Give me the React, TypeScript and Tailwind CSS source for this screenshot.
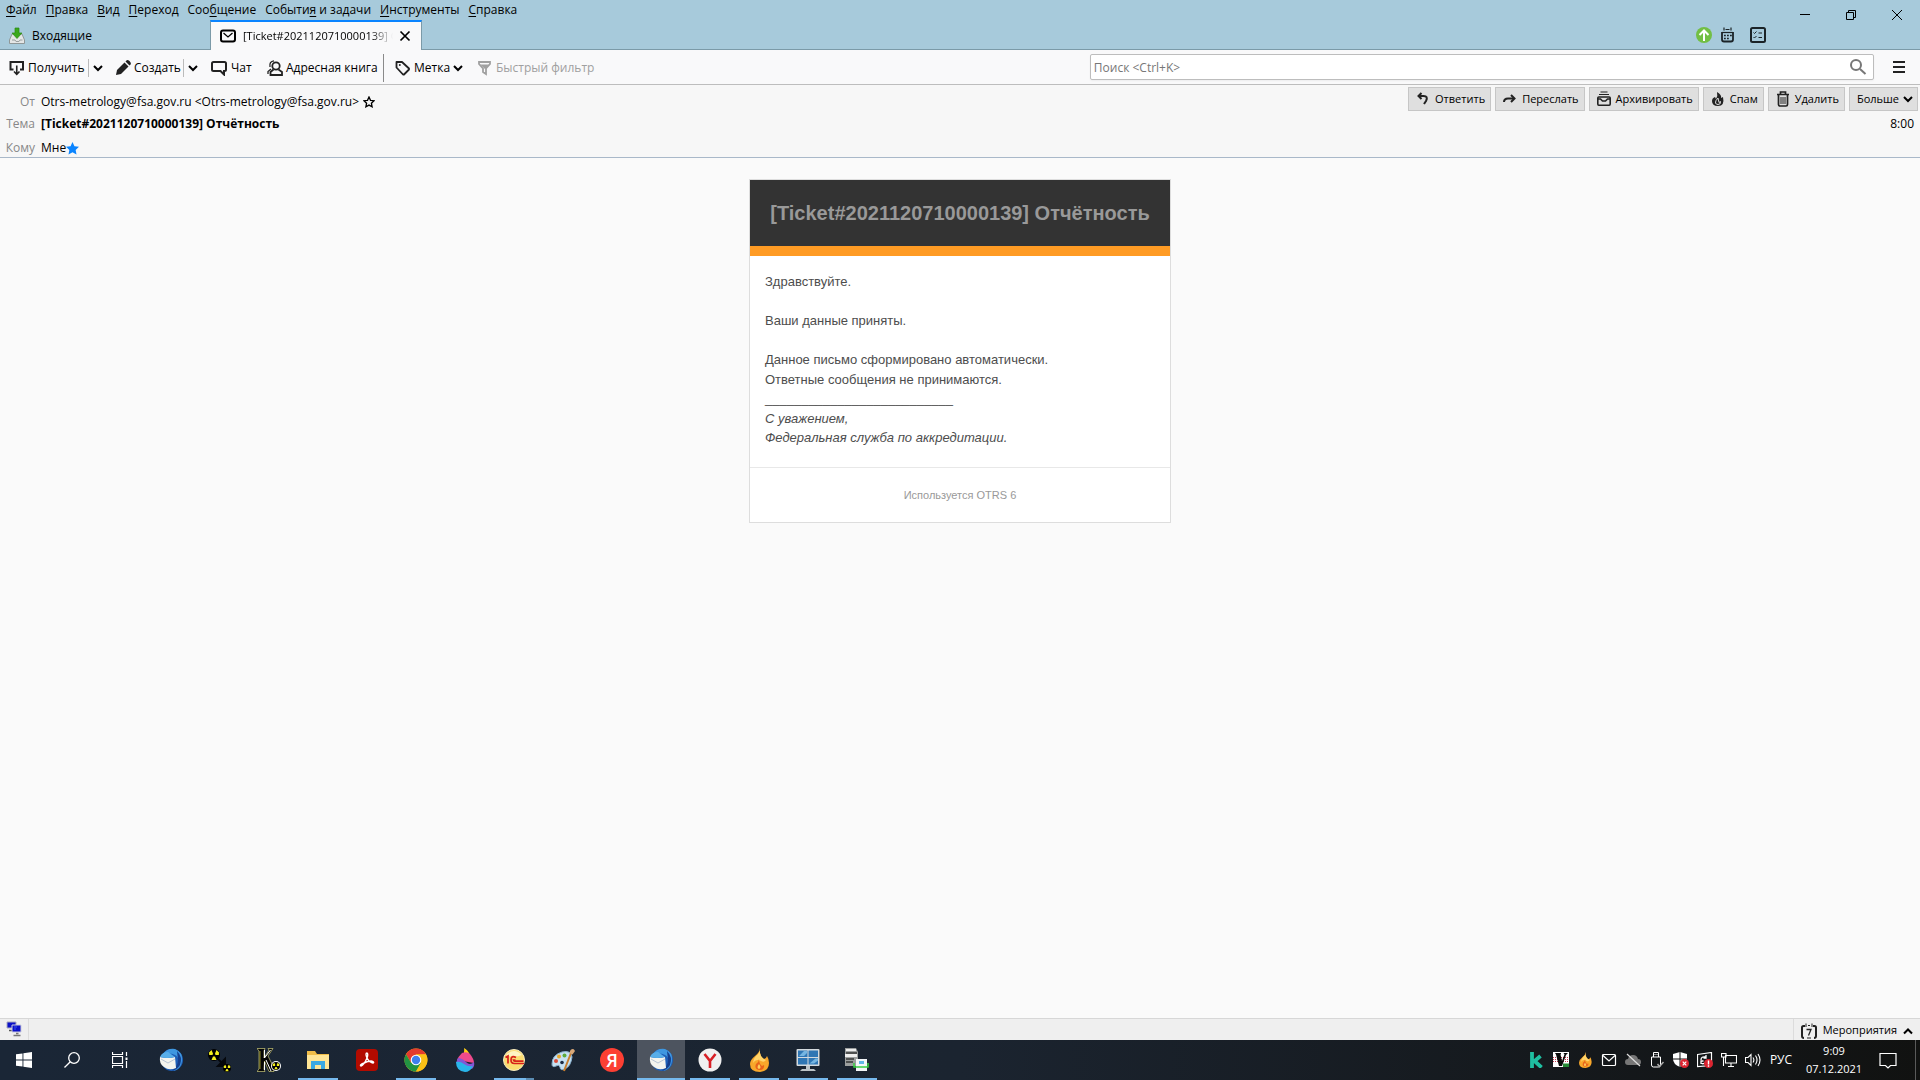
import type { ReactNode } from 'react';

const menuItems = [
  { before: '', key: 'Ф', after: 'айл' },
  { before: '', key: 'П', after: 'равка' },
  { before: '', key: 'В', after: 'ид' },
  { before: '', key: 'П', after: 'ереход' },
  { before: 'Соо', key: 'б', after: 'щение' },
  { before: 'Событи', key: 'я', after: ' и задачи' },
  { before: '', key: 'И', after: 'нструменты' },
  { before: '', key: 'С', after: 'правка' },
];

interface IconProps {
  children: ReactNode;
  className?: string;
  box?: number;
}

function Icon({ children, className = 'size-4', box = 16 }: IconProps) {
  return (
    <svg
      viewBox={`0 0 ${box} ${box}`}
      className={`shrink-0 ${className}`}
      fill="none"
      stroke="currentColor"
      strokeWidth="2"
      aria-hidden="true"
    >
      {children}
    </svg>
  );
}

function Chevron({ up = false }: { up?: boolean }) {
  return (
    <Icon className="size-2.5" box={10}>
      {up ? <path d="M1 7.5 5 3.5l4 4" /> : <path d="M1 3l4 4 4-4" />}
    </Icon>
  );
}

function TitleArea() {
  return (
    <header className="flex justify-between bg-[#a7cadb] text-black">
      <div className="min-w-0">
        <nav className="flex h-5 items-center gap-[9px] pl-1.5" aria-label="Меню">
          {menuItems.map((item) => (
            <button key={item.after} className="leading-5 whitespace-nowrap">
              {item.before}
              <span className="underline underline-offset-2">{item.key}</span>
              {item.after}
            </button>
          ))}
        </nav>
        <div className="flex h-[29px]" role="tablist">
          <button role="tab" aria-selected="false" className="flex w-[210px] items-center gap-1.5 pt-0.5 pl-2">
            <Icon className="size-[18px]" box={18}>
              <path d="M4 7h10l2.5 6v3.500h-15V13z" fill="#e4e6e6" stroke="#8f9797" strokeWidth="1" />
              <path d="M4 13h3l1 1.500h3l1-1.500h2.500" stroke="#9aa0a0" strokeWidth="1" />
              <path d="M7 1h4v5h3L9 11.500 4 6h3z" fill="#3aa81c" stroke="#2b8a12" strokeWidth=".7" />
            </Icon>
            Входящие
          </button>
          <div className="z-10 -mb-px flex w-[212px] items-center gap-1.5 border-x border-t-2 border-x-[#7b9aa8] border-t-[#0a84ff] bg-[#f9f9fa] pl-2">
            <Icon className="size-[18px]" box={18}>
              <rect x="2" y="3.500" width="14" height="11" rx="2" />
              <path d="M4.500 6 9 10l4.500-4" strokeWidth="1.300" />
            </Icon>
            <button
              role="tab"
              aria-selected="true"
              className="w-[150px] overflow-hidden mask-r-from-85% text-left text-[11px] whitespace-nowrap"
            >
              [Ticket#2021120710000139] Отчётность
            </button>
            <button aria-label="Закрыть вкладку">
              <Icon className="size-3" box={12}>
                <path d="M1.500 1.500l9 9M10.500 1.500l-9 9" strokeWidth="1.700" />
              </Icon>
            </button>
          </div>
        </div>
      </div>
      <div className="flex items-start">
        <div className="mt-[27px] mr-4 flex items-center text-[#1b2327]">
          <button aria-label="Обновление" className="mr-2">
            <Icon>
              <circle cx="8" cy="8" r="8" fill="#72bf44" stroke="none" />
              <path d="M8 14V4M3.500 8 8 3.500 12.500 8" stroke="#fff" strokeWidth="2" />
            </Icon>
          </button>
          <button aria-label="Календарь" className="mr-3.5">
            <Icon>
              <path d="M2 5v7.500q0 2 2 2h7q2 0 2-2V5" strokeWidth="1.800" />
              <path d="M4 .5v3M11 .5v3M5.500 2.500h4" strokeWidth="1.200" />
              <path d="M2 5.500h11" strokeWidth="1.200" />
              <path d="M4 8.500h8M4 11.500h5" strokeDasharray="1.800 1.200" strokeWidth="1.500" />
            </Icon>
          </button>
          <button aria-label="Задачи">
            <Icon>
              <rect x="1" y="1" width="14" height="14" rx="1.500" />
              <path d="M3.500 5.500l1 1 2-2M3.500 10l1 1 2-2M8.500 6H12M8.500 10.500H12" strokeWidth="1" />
            </Icon>
          </button>
        </div>
        <div className="flex">
          <button aria-label="Свернуть" className="flex h-[30px] w-[46px] items-center justify-center">
            <Icon className="size-2.5" box={10}>
              <path d="M0 4.500h10" strokeWidth="1" />
            </Icon>
          </button>
          <button aria-label="Восстановить" className="flex h-[30px] w-[46px] items-center justify-center">
            <Icon className="size-2.5" box={10}>
              <path d="M.5 2.500h7v7h-7zM2.500 2.500v-2h7v7h-2" strokeWidth="1" />
            </Icon>
          </button>
          <button aria-label="Закрыть" className="flex h-[30px] w-[46px] items-center justify-center">
            <Icon className="size-2.5" box={10}>
              <path d="M0 0l10 10M10 0 0 10" strokeWidth="1" />
            </Icon>
          </button>
        </div>
      </div>
    </header>
  );
}

function Toolbar() {
  return (
    <div className="flex h-9 items-center border-t border-b border-t-[#7b9aa8] border-b-[#bdbdbd] bg-[#f9f9fa] text-black">
      <div className="flex items-center pt-0.5">
        <div className="flex w-[107px] items-center pl-[9px]">
          <button className="flex flex-1 items-center gap-[3px] whitespace-nowrap">
            <Icon className="size-4 text-[#222]">
              <path d="M4.500 9.500H1.500V2H14v7.500h-3" />
              <path d="M7.750 5.500v9M5 11.500l2.750 2.750 2.750-2.750" strokeWidth="1.600" />
            </Icon>
            Получить
          </button>
          <button aria-label="Получить: меню" className="flex h-[18px] items-center border-l border-[#bbb] px-1">
            <Chevron />
          </button>
        </div>
        <div className="flex w-[95px] items-center pl-2">
          <button className="flex flex-1 items-center gap-[3px] whitespace-nowrap">
            <Icon className="size-4 text-[#222]">
              <path d="M1 15l1-5 7.500-7.500 4 4L6 14z" fill="currentColor" stroke="none" />
              <path d="M10.500 1.500 12 0q3 0 4 4l-1.500 1.500z" fill="currentColor" stroke="none" />
            </Icon>
            Создать
          </button>
          <button aria-label="Создать: меню" className="flex h-[18px] items-center border-l border-[#bbb] px-1">
            <Chevron />
          </button>
        </div>
        <button className="ml-[9px] flex w-14 items-center gap-1">
          <Icon className="size-4 text-[#222]">
            <path d="M2.500 2h11q1.500 0 1.500 1.500v6q0 1.500-1.500 1.500H13v3.500L9.500 11h-7Q1 11 1 9.500v-6Q1 2 2.500 2z" />
          </Icon>
          Чат
        </button>
        <button className="flex w-[116px] items-center gap-[3px] whitespace-nowrap">
          <Icon className="size-4 text-[#222]">
            <circle cx="9" cy="6" r="3.700" strokeWidth="1.800" />
            <path d="M6.500 9.500 3.500 12v3h11.500v-3L11.500 9.500" strokeWidth="1.800" />
            <path d="M4 9 1 11.500V14M3 7Q2 1.500 7 .8" strokeWidth="1.300" />
          </Icon>
          Адресная книга
        </button>
        <div className="mr-[11px] h-7 border-l border-[#8a8a8a]" />
        <button className="flex w-[82px] items-center gap-[3px]">
          <Icon className="size-4 text-[#222]">
            <path d="M1.500 2v5.500l6.500 7h1l5-5v-1l-7-6.500z" strokeWidth="1.800" strokeLinejoin="round" />
            <circle cx="4.800" cy="5" r="1" fill="currentColor" stroke="none" />
          </Icon>
          Метка
          <Chevron />
        </button>
        <button className="flex items-center gap-[3px] whitespace-nowrap text-[#a0a0a0]">
          <Icon>
            <path d="M2 2h11v2L9 8.500V14l-3-2V8.500L2 4z" strokeWidth="1.800" />
            <path d="M3 4.500h9L8 9z" fill="currentColor" stroke="none" />
          </Icon>
          Быстрый фильтр
        </button>
      </div>
      <label className="ml-auto flex h-[26px] w-[calc(41%-3px)] items-center rounded-xs border border-[#bdbdbd] bg-white pr-1.5 pl-[3px] shadow-xs">
        <input
          aria-label="Поиск"
          placeholder="Поиск <Ctrl+K>"
          className="min-w-0 flex-1 pt-0.5 outline-none placeholder:text-[#777]"
        />
        <Icon className="size-[18px] text-[#777]" box={18}>
          <circle cx="7" cy="7" r="5" />
          <path d="M11 11l5.500 5" />
        </Icon>
      </label>
      <button aria-label="Меню приложения" className="mr-3.5 ml-[18px]">
        <Icon className="size-3.5 text-[#222]" box={14}>
          <path d="M1 2h12M1 7h12M1 12h12" />
        </Icon>
      </button>
    </div>
  );
}

const actions = [
  {
    label: 'Ответить',
    icon: (
      <>
        <path d="M3.500 5h5q5 0 2.500 5l-2 3" />
        <path d="M6.500 2 3.500 5l3 3" />
      </>
    ),
  },
  {
    label: 'Переслать',
    icon: (
      <>
        <path d="M2 11q0-3.500 4-3.500h6" />
        <path d="M9 4l3.500 3.500L9 11" />
      </>
    ),
  },
  {
    label: 'Архивировать',
    icon: (
      <>
        <path d="M4.500 1h7M3 3.500h10" strokeWidth="1.200" />
        <path d="M1.800 7q0-1 1-1h10.400q1 0 1 1v6q0 1.200-1 1.200H2.800q-1 0-1-1.200z" strokeWidth="1.600" />
        <path d="M2 8h2.500l2 2h3l2-2H14" strokeWidth="1.600" />
      </>
    ),
  },
  {
    label: 'Спам',
    icon: (
      <>
        <path d="M7 1q5 3 4 6l2-1q2 9-5 9-6 0-6-5 0-3 3-4l1 2q2-3 1-7z" fill="currentColor" stroke="none" />
        <path d="M8 7q-3 3-2.500 5 .5 1.500 2.500 1.500 3 0 2.500-3L9 11.500z" stroke="#ddd" strokeWidth="1" />
      </>
    ),
  },
  {
    label: 'Удалить',
    icon: (
      <>
        <path d="M2 3.500h12M5.500 3V1h5v2M3.500 4v9.500q0 1.500 1.500 1.500h6q1.500 0 1.500-1.500V4" strokeWidth="1.700" />
        <path d="M6 6v7M8 6v7M10 6v7" strokeWidth="1" />
      </>
    ),
  },
];

function MessageHeader() {
  return (
    <section className="flex justify-between border-b border-[#a9b8c9] bg-[#f7f7f7] text-black">
      <dl className="grid grid-cols-[35px_auto] content-start gap-x-1.5 pt-1.5 whitespace-nowrap">
        <dt className="text-right leading-[22px] text-[#888]">От</dt>
        <dd className="flex items-center gap-1 leading-[22px]">
          Otrs-metrology@fsa.gov.ru &lt;Otrs-metrology@fsa.gov.ru&gt;
          <button aria-label="Добавить в адресную книгу">
            <Icon className="size-3" box={12}>
              <path d="M6 1l1.500 3.300 3.500.4-2.600 2.500.7 3.600L6 9.100l-3.100 1.700.7-3.600L1 4.700l3.500-.4z" strokeWidth="1.300" />
            </Icon>
          </button>
        </dd>
        <dt className="text-right leading-[22px] text-[#888]">Тема</dt>
        <dd className="leading-[22px] font-bold">[Ticket#2021120710000139] Отчётность</dd>
        <dt className="pt-1 text-right leading-[18px] text-[#888]">Кому</dt>
        <dd className="flex items-center pt-1 leading-[18px]">
          Мне
          <Icon className="size-[13px] text-[#0a84ff]" box={12}>
            <path d="M6 0l1.800 3.900 4.200.5-3.100 2.900.8 4.200L6 9.500l-3.700 2 .8-4.200L0 4.400l4.200-.5z" fill="currentColor" stroke="none" />
          </Icon>
        </dd>
      </dl>
      <div className="flex flex-col items-end pt-0.5 pr-0.5">
        <div className="flex gap-1 text-[11px]">
          {actions.map((action) => (
            <button
              key={action.label}
              className="flex h-6 items-center gap-1 border border-[#c6c6c6] bg-[#dfdfdf] pr-[5px] pl-1.5 whitespace-nowrap"
            >
              <Icon className="size-4 text-[#222]">{action.icon}</Icon>
              {action.label}
            </button>
          ))}
          <button className="flex h-6 items-center gap-1 border border-[#c6c6c6] bg-[#dfdfdf] pr-1 pl-[7px]">
            Больше
            <Chevron />
          </button>
        </div>
        <time className="pt-1 pr-1 leading-[18px]">8:00</time>
      </div>
    </section>
  );
}

function Message() {
  return (
    <main className="flex-1 bg-[#fafafa] pt-[21px]">
      <article className="mx-auto w-[422px] border border-[#ddd] bg-white font-['Liberation_Sans',Arial,sans-serif] text-[13px] leading-normal text-[#4d4d4d]">
        <h1 className="border-b-10 border-[#ff9b24] bg-[#333] py-[17px] text-center text-xl leading-8 font-bold whitespace-nowrap text-[#999]">
          [Ticket#2021120710000139] Отчётность
        </h1>
        <div className="px-[15px] pt-4 pb-[19px]">
          <p>Здравствуйте.</p>
          <br />
          <p>Ваши данные приняты.</p>
          <br />
          <p>
            Данное письмо сформировано автоматически.
            <br />
            Ответные сообщения не принимаются.
            <br />
            __________________________
            <br />
            <i>
              С уважением,
              <br />
              Федеральная служба по аккредитации.
            </i>
          </p>
        </div>
        <footer className="border-t border-[#e8e8e8] py-[19px] text-center text-[11px] leading-4 text-[#999]">
          Используется OTRS 6
        </footer>
      </article>
    </main>
  );
}

function StatusBar() {
  return (
    <div className="flex h-[22px] items-stretch justify-between border-t border-[#d7d7d7] bg-[#efefef] text-black">
      <div className="flex w-[29px] items-start border-r border-[#dcdcdc] pt-0.5 pl-1.5">
        <Icon>
          <path d="M1 1h9v6H1z" fill="#0a10c8" stroke="#aab" strokeWidth="1" />
          <path d="M3 9.500h4" stroke="#555" strokeWidth="1.500" />
          <path d="M6 4h9v7H6z" fill="#0a10c8" stroke="#ccd" strokeWidth="1" />
          <path d="M8 6h3M8 8h2" stroke="#3b50f0" strokeWidth="1" />
          <path d="M7.500 14.500h7M10 12.500h2.500" stroke="#777" strokeWidth="1.500" />
        </Icon>
      </div>
      <button className="flex items-center gap-1.5 border-l border-[#dcdcdc] px-[7px] pt-0.5 text-[11px]">
        <Icon>
          <path d="M4 3H2.500Q1 3 1 4.500V13q0 2 2 2M13 15q2 0 2-2V4.500Q15 3 13.500 3H12" stroke="#222" />
          <path d="M5 .5v3.500M11 .5v3.500M7 2.500h2M6 15h4" stroke="#222" strokeWidth="1" />
          <path d="M5.500 6.500h4.500L7.500 12.500" stroke="#222" strokeWidth="1.300" />
        </Icon>
        Мероприятия
        <Chevron up />
      </button>
    </div>
  );
}

function Thunderbird() {
  return (
    <Icon className="size-6" box={24}>
      <circle cx="13" cy="12" r="11" fill="#1e5fb8" stroke="none" />
      <path d="M4 6Q8 0 16 1q8 3 7 12-1 8-9 10 7-5 5-13Q16 4 4 6z" fill="#3f97e0" stroke="none" />
      <path d="M18 3q6 6 3 14-3 5-8 6 6-5 6-11z" fill="#163f8e" stroke="none" />
      <path d="M1 9q8 2 15 0l1 11q-7 3-12-1-5-3-4-10z" fill="#f4f4ee" stroke="none" />
      <path d="M2 11l7 4 7-4" stroke="#b8c4d4" strokeWidth="1" />
      <path d="M1 9Q3 4 9 4l7 5q-8 2-15 0z" fill="#58aee8" stroke="none" />
    </Icon>
  );
}

function Flame({ className }: { className: string }) {
  return (
    <Icon className={className} box={24}>
      <path d="M13 0q0 4-5 8-5 4-5 8 0 8 10 8 9-1 9-9 0-4-2-7-1 3-3 3-5-3-4-11z" fill="#f8a72b" stroke="none" />
      <path d="M13 0q-1 4 1 8 2 3 5 4-2 3-5 1-5-3-8 2 0-4 3-7 4-3 4-8z" fill="#ffd46a" stroke="none" />
      <path d="M12 11q0 3-3 5-2 5 3 6 6 0 5-5l-2 1q-3-2-3-7z" fill="#e8641b" stroke="none" />
      <path d="M12 16q-3 4 0 5 3-1 0-5z" fill="#ffcf5c" stroke="none" />
    </Icon>
  );
}

function Radiation({ cx, cy, r }: { cx: number; cy: number; r: number }) {
  return (
    <g transform={`translate(${cx} ${cy}) scale(${r / 6})`} stroke="none">
      <circle r="6" fill="#000" />
      <path d="M-1-1.500-2.500-5-5-2.500-4.800 0h3.300zM1-1.500 2.500-5 5-2.500 4.800 0H1.500zM-1 1.500h2L2.500 5h-5z" fill="#f2ee1d" />
    </g>
  );
}

type AppState = 'idle' | 'open' | 'stacked' | 'active';

const taskbarApps: { name: string; state: AppState; icon: ReactNode }[] = [
  { name: 'Thunderbird', state: 'idle', icon: <Thunderbird /> },
  {
    name: 'Radiation',
    state: 'idle',
    icon: (
      <Icon className="size-6" box={24}>
        <Radiation cx={6} cy={7} r={6} />
        <path d="M10 11l5 5M17 11v7h-7z" stroke="#05080c" fill="#05080c" />
        <Radiation cx={19} cy={20} r={4} />
      </Icon>
    ),
  },
  {
    name: 'K',
    state: 'idle',
    icon: (
      <Icon className="size-6" box={24}>
        <path
          d="M0 .5h8L7 3v7l5-8-1-1.500h5L11 8l5 10 1 5.500h-5L7.500 13 7 21l1 2.500H0L2 21V3z"
          fill="#050505"
          stroke="#e9e58a"
          strokeWidth=".6"
        />
        <path d="M7.500 2v8l6-8M9 12l5 11M7.500 14v8" stroke="#fff" strokeWidth="1" />
        <path d="M3 3v18" stroke="#e4dd3c" strokeWidth=".6" />
        <circle cx="19" cy="18" r="5" fill="#fff" stroke="none" />
        <Radiation cx={19} cy={18} r={4} />
      </Icon>
    ),
  },
  {
    name: 'Проводник',
    state: 'open',
    icon: (
      <Icon className="size-6" box={24}>
        <path d="M1 3h8l2 3h12v15H1z" fill="#f0bd49" stroke="none" />
        <path d="M1 7h22v14H1z" fill="#ffe596" stroke="none" />
        <path d="M5 21v-8h14v8h-4v-4H9v4z" fill="#3ba9e3" stroke="none" />
      </Icon>
    ),
  },
  {
    name: 'Acrobat',
    state: 'idle',
    icon: (
      <Icon className="size-6" box={24}>
        <rect x="1" y="1" width="22" height="22" rx="4" fill="#b30b00" stroke="none" />
        <path
          d="M6 18q-2-1 3-3 4-2 7-2 4 1 2 2-3 0-6-5-2-5 0-5 1.500 1 0 5-3 7-6 8z"
          stroke="#fff"
          strokeWidth="1.400"
        />
      </Icon>
    ),
  },
  {
    name: 'Chrome',
    state: 'open',
    icon: (
      <Icon className="size-6" box={24}>
        <circle cx="12" cy="12" r="11.500" fill="#fbc116" stroke="none" />
        <path d="M2 6.250A11.500 11.500 0 0 1 22 6.250L12 6.500 7 14.800z" fill="#e33b2e" stroke="none" />
        <path d="M2 6.250A11.500 11.500 0 0 0 12 23.500L17 14.800H7z" fill="#229342" stroke="none" />
        <path d="M12 6.500h10A11.500 11.500 0 0 1 12 23.500l5-8.700z" fill="#fbc116" stroke="none" />
        <circle cx="12" cy="12" r="5.300" fill="#fff" stroke="none" />
        <circle cx="12" cy="12" r="4.200" fill="#3f7fee" stroke="none" />
      </Icon>
    ),
  },
  {
    name: 'Paint 3D',
    state: 'idle',
    icon: (
      <Icon className="size-6" box={24}>
        <path d="M11 0q4 2 6 7l-8 2Q12 5 11 0z" fill="#ffcf14" stroke="none" />
        <path d="M9 5q5-2 8 1 4 5 4 9L4 12q1-3 5-7z" fill="#ee4a8b" stroke="none" />
        <path d="M5 10q4 0 8 4t8 0q1 4-2 7L3 15z" fill="#8457d4" stroke="none" />
        <path d="M3 14q4-1 8 2t9 2q-3 6-8 6-9-1-9-10z" fill="#29b5ea" stroke="none" />
      </Icon>
    ),
  },
  {
    name: '1С',
    state: 'stacked',
    icon: (
      <Icon className="size-6" box={24}>
        <circle cx="12" cy="12" r="10.500" fill="#fbdc71" stroke="#f8ecc0" strokeWidth="1" />
        <path d="M4 7q8-8 16 0-8 3-16 0z" fill="#fff3c2" stroke="none" />
        <path d="M3.500 9.500 6 8v7.500M14 9.500Q9 7 9 12q0 3.500 3.500 3.500H22M13.500 12H11.500q.5 1.500 2 1.200h8" stroke="#d7211a" strokeWidth="1.700" />
      </Icon>
    ),
  },
  {
    name: 'Paint',
    state: 'idle',
    icon: (
      <Icon className="size-6" box={24}>
        <path d="M1 16Q1 7 11 4q9-2 10 5-1 9-7 12-5 2-5-2-1-3-4-1-4 2-4-2z" fill="#c7e1f2" stroke="#88b0ce" strokeWidth="1" />
        <circle cx="5" cy="13" r="2" fill="#d94c39" stroke="none" />
        <circle cx="8" cy="8.500" r="2" fill="#e8a72d" stroke="none" />
        <circle cx="13.500" cy="7.500" r="2" fill="#5cab3c" stroke="none" />
        <circle cx="11" cy="14.500" r="1.800" fill="#1c2b45" stroke="none" />
        <path d="M20 5 13 23" stroke="#c97e2e" strokeWidth="2" />
        <path d="M18.500 5Q19 1 22 1q1 0 2 2l-2.500 3.500z" fill="#d9a878" stroke="none" />
      </Icon>
    ),
  },
  {
    name: 'Яндекс',
    state: 'idle',
    icon: (
      <span className="flex size-6 items-center justify-center rounded-full bg-[#fc3f33] text-lg leading-6 font-semibold text-white">
        Я
      </span>
    ),
  },
  { name: 'Thunderbird — почта', state: 'active', icon: <Thunderbird /> },
  {
    name: 'Яндекс.Браузер',
    state: 'open',
    icon: (
      <Icon className="size-6" box={24}>
        <circle cx="12" cy="12" r="11.500" fill="#f0f0f0" stroke="none" />
        <path d="M6.500 6l5.500 7v7M17.500 6 12 13" stroke="#d81f26" strokeWidth="2.600" />
      </Icon>
    ),
  },
  { name: 'Пламя', state: 'open', icon: <Flame className="size-6" /> },
  {
    name: 'Мониторинг',
    state: 'open',
    icon: (
      <Icon className="size-6" box={24}>
        <rect x=".5" y="1" width="23" height="17" rx="1" fill="#d4dade" stroke="none" />
        <path d="M2 2.500h9.500V9H2zM12.500 2.500H22V9h-9.500zM2 10h9.500v6.500H2zM12.500 10H22v6.500h-9.500z" fill="#2f76b4" stroke="none" />
        <path d="M3 8l5-5h3v2L8 8zM13.500 15.500l6-5H22v2l-4 3z" fill="#75b5e1" stroke="none" />
        <path d="M10 18h4v3h4l2 2H4l2-2h4z" fill="#bcc3c7" stroke="none" />
      </Icon>
    ),
  },
  {
    name: 'Сканер',
    state: 'open',
    icon: (
      <Icon className="size-6" box={24}>
        <path d="M0 0h11l2 4v14H0z" fill="#9c9f9f" stroke="none" />
        <path d="M1 1h10v2H1zM0 6h12v3H0z" fill="#eee" stroke="none" />
        <path d="M1 5h11M1 11h8M1 14h7" stroke="#353737" strokeWidth="1.300" />
        <path d="M11 11h11v12H11z" fill="#f2f6f8" stroke="none" />
        <path d="M14 13h5v3h-5z" fill="#61b8e8" stroke="none" />
        <path d="M9 15v4h14v-4" stroke="#37cf43" strokeWidth="1.500" />
      </Icon>
    ),
  },
];

const underline: Record<AppState, string> = {
  idle: 'hidden',
  open: 'mx-1 h-0.5 bg-[#76b9ed]',
  stacked: 'mx-1 h-0.5 border-r-8 border-[#5b8db3] bg-[#76b9ed]',
  active: 'h-0.5 bg-[#76b9ed]',
};

const trayIcons: { name: string; art: ReactNode }[] = [
  {
    name: 'Kaspersky',
    art: <path d="M3 0v16M4.500 10 11.500 4M5 8.500l7.500 7" stroke="#1fbfa1" strokeWidth="3.800" />,
  },
  {
    name: 'V',
    art: (
      <>
        <path d="M0 0h16v15H0z" fill="#fff" stroke="none" />
        <path d="M0 5.500h16M0 7.500h16M0 9.500h16" stroke="#c43a50" strokeDasharray="1 1" strokeWidth="1" />
        <path d="M2 1h6v1l-.5.5L9 9l2.500-6.500L10.500 1H15L13 3 9 14H6L3 2.500z" fill="#0a0a0a" stroke="none" />
        <path d="M10 11.500h6V15h-6z" fill="#258a35" stroke="none" />
      </>
    ),
  },
  { name: 'Пламя', art: null },
  {
    name: 'Почта',
    art: (
      <>
        <rect x="1.500" y="2.500" width="13" height="11" rx="1" strokeWidth="1.200" />
        <path d="M2 3.500l6 5.500 6-5.500" strokeWidth="1.200" />
      </>
    ),
  },
  {
    name: 'OneDrive',
    art: (
      <>
        <path d="M3 13q-3 0-3-3t3-3q1-4 5-4t5 4q3 0 3 3t-3 3z" fill="#777" stroke="none" />
        <path d="M2 2l13 12" stroke="#ddd" strokeWidth="1.200" />
      </>
    ),
  },
  {
    name: 'USB',
    art: (
      <>
        <path d="M4.500 5V.500h5V5M2.500 5h9v8q0 2-2 2h-5q-2 0-2-2zM5.500 2.500h1M7.500 2.500h1" strokeWidth="1" />
        <path d="M8.500 12l2 2.500 4-4.500" stroke="#aaa" strokeWidth="1.500" />
      </>
    ),
  },
  {
    name: 'Защита',
    art: (
      <>
        <path d="M7 0l7 2v5q0 5-7 8Q0 12 0 7V2z" fill="#fff" stroke="none" />
        <path d="M7 0v15M0 7h14" stroke="#111" strokeWidth="1" />
        <circle cx="11.500" cy="11.500" r="4.500" fill="#dc2430" stroke="none" />
        <path d="M9.700 9.700l3.600 3.600M13.300 9.700l-3.600 3.600" strokeWidth="1.200" />
      </>
    ),
  },
  {
    name: 'Обновления',
    art: (
      <>
        <path d="M.5 2.500l14-2v13l-14 1z" strokeWidth="1.200" />
        <path d="M4 8q0-4 5-3M9 3v3H6.500M4 12v-3h2.500M4.500 11.500q3 1 5-2" strokeWidth="1.300" />
        <circle cx="11.500" cy="11.500" r="4.500" fill="#dc2430" stroke="none" />
        <path d="M11.500 8.500v4M11.500 13.300v1.400" strokeWidth="1.400" />
      </>
    ),
  },
  {
    name: 'Сеть',
    art: <path d="M4.500 3.500h11v7.500H4.500zM10 11v3.500M7 14.500h6M.5 1.500H5V5H.5zM2.500 5v9" strokeWidth="1.100" />,
  },
  {
    name: 'Громкость',
    art: (
      <path
        d="M.5 5.500h2.500L6 2.500v11l-3-3H.5zM8 5.500q1.800 2.500 0 5M10.500 3.500q3 4.500 0 9M13 2q4 6 0 12"
        strokeWidth="1.100"
      />
    ),
  },
];

function Taskbar() {
  return (
    <footer className="flex h-10 justify-between bg-linear-to-r from-[#1a2636] via-[#1b2430] to-[#111211] text-white">
      <div className="flex">
        <button aria-label="Пуск" className="flex w-12 items-center justify-center">
          <Icon>
            <path d="M0 2.300 6.500 1.400v6.200H0zM7.400 1.200 16 0v7.600H7.400zM0 8.400h6.500v6.200L0 13.700zM7.400 8.400H16V16l-8.600-1.200z" fill="#fff" stroke="none" />
          </Icon>
        </button>
        <button aria-label="Поиск Windows" className="flex w-12 items-center justify-center">
          <Icon>
            <circle cx="10" cy="6" r="5.300" strokeWidth="1.300" />
            <path d="M6.300 9.700.5 15.500" strokeWidth="1.300" />
          </Icon>
        </button>
        <button aria-label="Представление задач" className="mr-[3px] flex w-12 items-center justify-center">
          <Icon>
            <path d="M.5 0v2.500h10V0M.5 4.500h10v7H.5zM.5 16v-2.500h10V16M14.500 0v4M14.500 9v7" strokeWidth="1.200" />
            <path d="M13.500 5.500h2v2.500h-2z" fill="#fff" stroke="none" />
          </Icon>
        </button>
        <div className="flex gap-px">
          {taskbarApps.map((app) => (
            <button
              key={app.name}
              aria-label={app.name}
              className={`relative flex w-12 items-center justify-center ${app.state === 'active' ? 'bg-[#4d545f]' : ''}`}
            >
              {app.icon}
              <span className={`absolute inset-x-0 bottom-0 ${underline[app.state]}`} />
            </button>
          ))}
        </div>
      </div>
      <div className="flex items-center">
        {trayIcons.map((item) => (
          <button key={item.name} aria-label={item.name} className="flex w-6 justify-center">
            {item.art ? <Icon>{item.art}</Icon> : <Flame className="size-4" />}
          </button>
        ))}
        <button className="w-8 text-center">РУС</button>
        <button className="flex w-[74px] flex-col items-center text-[11px] leading-[18px]">
          <span>9:09</span>
          <span>07.12.2021</span>
        </button>
        <button aria-label="Уведомления" className="flex w-[28px] justify-center pl-1.5">
          <Icon className="size-[18px]" box={18}>
            <path d="M1 2.500h16v12h-5.500L9 17l-2.500-2.500H1z" strokeWidth="1.200" />
          </Icon>
        </button>
        <div className="mr-1 ml-4 h-10 border-l border-[#5a5a5a]" />
      </div>
    </footer>
  );
}

export default function App() {
  return (
    <div className="flex min-h-screen flex-col font-['Open_Sans','Noto_Sans',sans-serif] text-xs">
      <TitleArea />
      <Toolbar />
      <MessageHeader />
      <Message />
      <StatusBar />
      <Taskbar />
    </div>
  );
}
